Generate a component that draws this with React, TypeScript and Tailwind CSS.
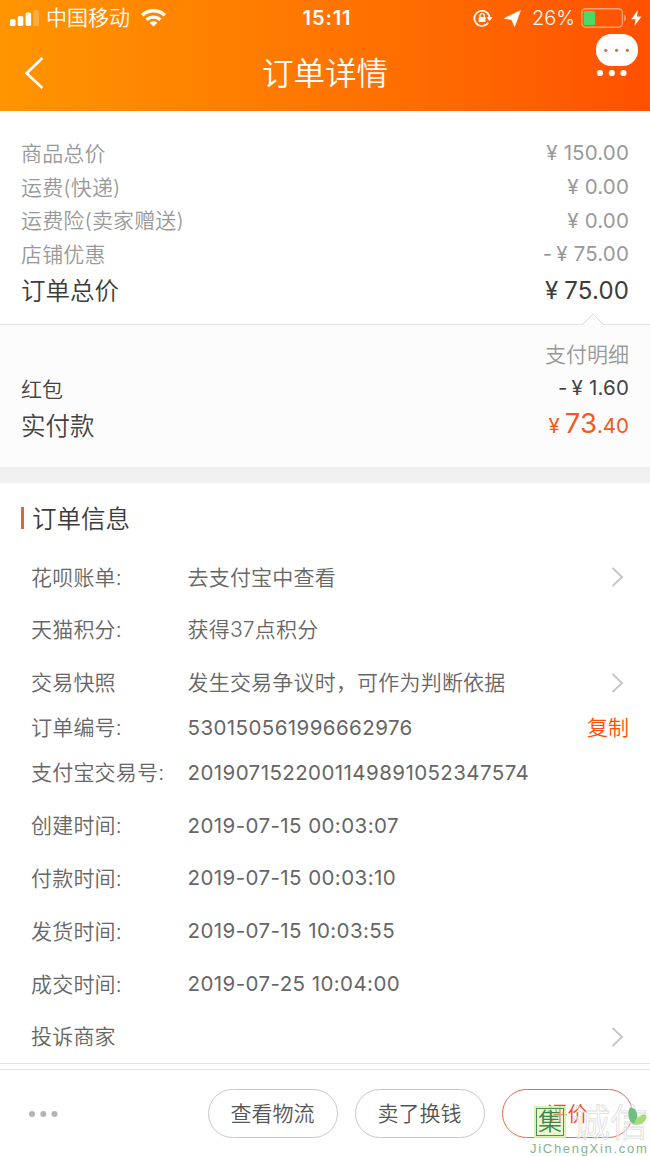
// Order detail page: price summary, payment breakdown, order info and the action bar.
import type { ReactNode } from 'react';

interface PriceRow {
  label: string;
  amount: string;
  negative?: boolean;
}

interface InfoRow {
  label: string;
  value?: string;
  numeric?: boolean;
  arrow?: boolean;
  copy?: boolean;
}

const prices: PriceRow[] = [
  { label: '商品总价', amount: '150.00' },
  { label: '运费(快递)', amount: '0.00' },
  { label: '运费险(卖家赠送)', amount: '0.00' },
  { label: '店铺优惠', amount: '75.00', negative: true },
];

const infoRows: InfoRow[] = [
  { label: '花呗账单:', value: '去支付宝中查看', arrow: true },
  { label: '天猫积分:', value: '获得37点积分' },
  { label: '交易快照', value: '发生交易争议时，可作为判断依据', arrow: true },
  { label: '订单编号:', value: '530150561996662976', numeric: true, copy: true },
  { label: '支付宝交易号:', value: '2019071522001149891052347574', numeric: true },
  { label: '创建时间:', value: '2019-07-15 00:03:07', numeric: true },
  { label: '付款时间:', value: '2019-07-15 00:03:10', numeric: true },
  { label: '发货时间:', value: '2019-07-15 10:03:55', numeric: true },
  { label: '成交时间:', value: '2019-07-25 10:04:00', numeric: true },
  { label: '投诉商家', arrow: true },
];

function StatusBar() {
  return (
    <div className="grid h-9 grid-cols-[1fr_auto_1fr] items-center pl-2.5 pr-2 text-[21px] leading-9">
      <div className="flex items-center">
        <svg width="29" height="16" viewBox="0 0 29 16" fill="#fff">
          <rect x="0" y="9" width="5.5" height="7" rx="1.5" />
          <rect x="7.8" y="6" width="5.5" height="10" rx="1.5" />
          <rect x="15.6" y="2.5" width="5.5" height="13.5" rx="1.5" />
          <rect x="23.4" y="0" width="5.5" height="16" rx="1.5" opacity="0.25" />
        </svg>
        <span className="ml-[7px]">中国移动</span>
        <svg className="ml-[11px]" width="25" height="18" viewBox="0 0 25 18" fill="none" stroke="#fff" strokeWidth="3.4">
          <path d="M1.2 6.2C7.6 0.3 17.4 0.3 23.8 6.2" />
          <path d="M5.5 10.7C9.5 7.2 15.5 7.2 19.5 10.7" />
          <path d="M12.5 17.6L8.7 13.7C10.9 11.9 14.1 11.9 16.3 13.7Z" fill="#fff" stroke="none" />
        </svg>
      </div>
      <span className="translate-x-px text-[20px] font-semibold tracking-[0.9px]">15:11</span>
      <div className="flex items-center justify-end">
        <svg width="20" height="18" viewBox="0 0 20 18" fill="none" stroke="#fff" strokeWidth="1.7">
          <path d="M15.2 13.8A7.6 7.6 0 1 1 16.6 9" />
          <path d="M13.4 8.2H19.8L16.6 12Z" fill="#fff" stroke="none" />
          <rect x="5.7" y="7.9" width="6.8" height="5.2" rx="0.6" fill="#fff" stroke="none" />
          <path d="M7 8.3V6.6A2.1 2.1 0 0 1 11.2 6.6V8.3" strokeWidth="1.3" />
        </svg>
        <svg className="ml-[11px]" width="17" height="17" viewBox="0 0 17 17" fill="#fff">
          <path d="M16.5 0.5L10.6 16.5L7.6 9.6L0.3 8.4Z" stroke="#fff" strokeWidth="0.6" strokeLinejoin="round" />
        </svg>
        <span className="ml-[11px] text-[20px] leading-9">26%</span>
        <svg className="ml-[6px]" width="46" height="20" viewBox="0 0 46 20" fill="none">
          <rect x="0.8" y="0.8" width="40.6" height="18.4" rx="4" stroke="#fff" strokeOpacity="0.45" strokeWidth="1.4" />
          <rect x="2.8" y="3" width="11.2" height="14" rx="1.5" fill="#4cd964" />
          <path d="M43.2 6.6C45.6 7.4 45.6 12.6 43.2 13.4Z" fill="#fff" fillOpacity="0.45" />
        </svg>
        <svg className="ml-[4px]" width="11" height="16" viewBox="0 0 11 16" fill="#fff">
          <path d="M6.8 0L0.3 9.2H4.6L3.4 16L10.5 6.6H6Z" />
        </svg>
      </div>
    </div>
  );
}

function Header() {
  return (
    <header className="h-[111px] shrink-0 bg-linear-to-r from-[#ff9500] to-[#ff5000] text-white">
      <StatusBar />
      <div className="grid h-[75px] grid-cols-[1fr_auto_1fr] items-center">
        <svg className="-mt-[2px] ml-6" width="20" height="34" viewBox="0 0 20 34" fill="none" stroke="#fff" strokeWidth="2.6">
          <path d="M18.4 2L2.6 17.2L18.4 32" />
        </svg>
        <h1 className="text-[31.5px] leading-[40px] font-[350]">订单详情</h1>
        <div className="flex flex-col items-end self-start pr-3">
          <svg className="-mt-0.5" width="42" height="44" viewBox="0 0 42 44" fill="#fff">
            <rect x="0" y="0" width="42" height="32" rx="15.5" />
            <g fill="#d8703c">
              <circle cx="9.8" cy="16.3" r="1.6" />
              <circle cx="20.6" cy="16.3" r="1.6" />
              <circle cx="31.4" cy="16.3" r="1.6" />
            </g>
            <circle cx="4" cy="39" r="3.1" />
            <circle cx="15.8" cy="39" r="3.1" />
            <circle cx="27.5" cy="39" r="3.1" />
          </svg>
        </div>
      </div>
    </header>
  );
}

function Amount({ value, negative }: { value: string; negative?: boolean }) {
  return (
    <span className="font-normal tracking-[0.15px]">
      {negative && <span className="mr-[4px]">-</span>}
      <span className="mr-[6px]">¥</span>
      {value}
    </span>
  );
}

function ChevronRight() {
  return (
    <svg className="mr-[5px]" width="13" height="20" viewBox="0 0 13 20" fill="none" stroke="#c8c8c8" strokeWidth="2">
      <path d="M1.5 1L11 10L1.5 19" />
    </svg>
  );
}

function PillButton({ children }: { children: ReactNode }) {
  return (
    <button className="h-[49px] w-[130px] rounded-full border border-[#c8c8c8] pr-px text-[21px] text-[#555]">
      {children}
    </button>
  );
}

// Site mark that floats over the bottom right corner
function SiteMark() {
  return (
    <div className="pointer-events-none absolute right-0 bottom-0 w-[120px]">
      <div className="flex items-center">
        <div className="ml-[4px] flex size-[32px] items-center justify-center border-2 border-[#d5f0a4]/70 bg-[#d0f09a]/45">
          <div className="flex size-[28px] items-center justify-center border border-[#4d9156] text-[24px] leading-none text-[#3f8550]">
            集
          </div>
        </div>
        <span className="ml-[6px] text-[38px] leading-[38px] whitespace-nowrap text-white/40 [-webkit-text-stroke:0.8px_#dcdcdc]">
          诚信
        </span>
      </div>
      <svg className="absolute top-[4px] right-[3px]" width="19" height="20" viewBox="0 0 19 20">
        <path d="M2 0.5C9 1 12 9 6 17.5C0 14-1 6 2 0.5Z" fill="#72bd82" />
        <path d="M6 18C7 12 10 9 12.5 9.5C13.5 6.5 18.5 6.5 18.5 10C18.5 14 13 18.5 6 18Z" fill="#a8dc78" />
      </svg>
      <div className="text-[13px] leading-[15px] tracking-[1.7px] whitespace-nowrap text-[#83b58e] [font-family:'Liberation_Sans',sans-serif]">
        JiChengXin.com
      </div>
    </div>
  );
}

export default function App() {
  return (
    <div className="relative flex h-[1156px] w-[650px] flex-col overflow-hidden bg-white font-[350] text-[#444] [font-family:Inter,'Noto_Sans_CJK_SC',sans-serif]">
      <Header />

      <section className="relative h-[214px] shrink-0 border-b border-[#e4e4e4] px-[21px] pt-[25px]">
        {prices.map((row) => (
          <div key={row.label} className="flex h-[33.7px] items-center justify-between text-[21px] leading-[33px] text-[#999]">
            <span className="pt-px tracking-[0.15px]">{row.label}</span>
            <span className="text-[20.5px]"><Amount value={row.amount} negative={row.negative} /></span>
          </div>
        ))}
        <div className="flex h-[40px] items-center justify-between text-[24.5px] text-[#3c3c3c]">
          <span className="pt-0.5">订单总价</span>
          <span className="text-[24px]"><Amount value="75.00" /></span>
        </div>
        <svg className="absolute right-[45px] -bottom-px" width="24" height="12" viewBox="0 0 24 12">
          <path d="M1 12L12 1L23 12" fill="#fcfcfc" stroke="#dcdcdc" />
        </svg>
      </section>

      <section className="h-[142px] shrink-0 bg-[#fcfcfc] px-[21px] pt-[13px]">
        <div className="text-right text-[21px] leading-[34px] text-[#999]">支付明细</div>
        <div className="flex h-[33px] items-center justify-between text-[21px]">
          <span className="pt-0.5">红包</span>
          <span className="text-[20.5px]"><Amount value="1.60" negative /></span>
        </div>
        <div className="flex h-[42px] items-center justify-between text-[24.5px]">
          <span>实付款</span>
          <span className="-mt-[4px] text-[20.5px] font-normal text-[#f4591b]">
            <span className="mr-[5px]">¥</span>
            <span className="text-[27.5px]">73</span>.40
          </span>
        </div>
      </section>

      <div className="h-4 shrink-0 bg-[#f0f0f0]" />

      <section className="shrink-0 border-b border-[#e4e4e4] px-[21px]">
        <div className="flex h-[68px] items-center pt-0.5">
          <span className="h-[22px] w-[3px] bg-[#e8622c]" />
          <h2 className="ml-[8px] pt-[3px] text-[24.5px] text-[#3c3c3c]">订单信息</h2>
        </div>
        {infoRows.map((row) => (
          <div
            key={row.label}
            className={`flex items-center pl-[10px] text-[21px] text-[#666] ${row.copy ? 'h-[37.3px]' : 'h-[52.8px]'}`}
          >
            <span className="w-[156.5px] shrink-0 tracking-[0.2px] whitespace-nowrap">{row.label}</span>
            <span
              className={`flex-1 whitespace-nowrap ${row.numeric ? 'text-[20.5px] font-normal tracking-[0.42px]' : 'tracking-[0.2px]'}`}
            >
              {row.value}
            </span>
            {row.arrow && <ChevronRight />}
            {row.copy && <span className="text-[#ff5000]">复制</span>}
          </div>
        ))}
      </section>

      <footer className="mt-[5px] flex h-[88px] shrink-0 items-center border-t border-[#e4e4e4] pr-[17px] pl-[29px]">
        <svg width="29" height="6" viewBox="0 0 29 6" fill="#b4b4b4">
          <circle cx="3" cy="3" r="3" />
          <circle cx="14.3" cy="3" r="3" />
          <circle cx="25.5" cy="3" r="3" />
        </svg>
        <div className="ml-auto flex gap-[17px]">
          <PillButton>查看物流</PillButton>
          <PillButton>卖了换钱</PillButton>
          <button className="h-[49px] w-[131px] rounded-full border border-[#e06a48] text-[21px] text-[#ee4e22]">
            评价
          </button>
        </div>
      </footer>

      <SiteMark />
    </div>
  );
}
